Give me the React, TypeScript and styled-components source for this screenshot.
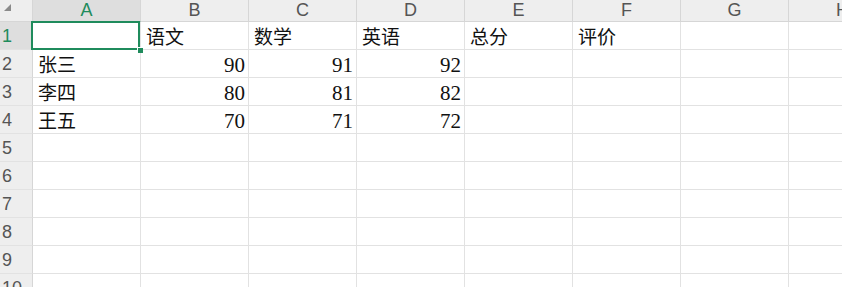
import styled, { createGlobalStyle } from "styled-components";

const GlobalStyle = createGlobalStyle`
  html, body {
    margin: 0;
    padding: 0;
    background: #fff;
    overflow: hidden;
  }
`;

const COLS = ["A", "B", "C", "D", "E", "F", "G", "H"];

const DATA: (string | number)[][] = [
  ["", "语文", "数学", "英语", "总分", "评价"],
  ["张三", 90, 91, 92],
  ["李四", 80, 81, 82],
  ["王五", 70, 71, 72],
];

const Sheet = styled.div`
  position: relative;
  display: grid;
  grid-template-columns: 33px repeat(8, 108px);
  grid-auto-rows: 28px;
  grid-template-rows: 22px;
  width: 842px;
  height: 287px;
  overflow: hidden;
`;

const Corner = styled.div`
  background: #eeeeee;
  border-right: 1px solid #d6d6d6;
  border-bottom: 1px solid #d6d6d6;
  position: relative;
`;

const Triangle = styled.div`
  position: absolute;
  left: 4px;
  top: 4px;
  width: 0;
  height: 0;
  border-left: 7px solid transparent;
  border-bottom: 7px solid #8a8a8a;
`;

const ColHead = styled.div<{ $active?: boolean }>`
  background: ${(p) => (p.$active ? "#dedede" : "#eeeeee")};
  border-right: 1px solid #d6d6d6;
  border-bottom: ${(p) => (p.$active ? "2px solid #1f8b5c" : "1px solid #d6d6d6")};
  margin-bottom: ${(p) => (p.$active ? "-1px" : "0")};
  color: ${(p) => (p.$active ? "#1f8b5c" : "#555")};
  font-family: "Liberation Sans", Arial, sans-serif;
  font-size: 18px;
  line-height: 20px;
  text-align: center;
`;

const RowHead = styled.div<{ $active?: boolean }>`
  background: ${(p) => (p.$active ? "#dedede" : "#eeeeee")};
  border-right: 1px solid #d6d6d6;
  border-bottom: 1px solid #e2e2e2;
  color: ${(p) => (p.$active ? "#1f8b5c" : "#555")};
  font-family: "Liberation Sans", Arial, sans-serif;
  font-size: 18px;
  line-height: 29px;
  padding-left: 2px;
`;

const Cell = styled.div<{ $num?: boolean }>`
  border-right: 1px solid #e2e2e2;
  border-bottom: 1px solid #e2e2e2;
  font-family: "Liberation Serif", "Noto Sans CJK SC", serif;
  font-size: ${(p) => (p.$num ? "21px" : "19px")};
  line-height: ${(p) => (p.$num ? "30px" : "31px")};
  color: #111;
  text-align: ${(p) => (p.$num ? "right" : "left")};
  padding: 0 3px 0 5px;
  white-space: nowrap;
  overflow: hidden;
`;

const Selection = styled.div`
  position: absolute;
  left: 31px;
  top: 21px;
  width: 105px;
  height: 25px;
  border: 2px solid #1f8b5c;
  pointer-events: none;
`;

const Handle = styled.div`
  position: absolute;
  right: -5px;
  bottom: -5px;
  width: 5px;
  height: 5px;
  background: #1f8b5c;
  border-left: 1px solid #fff;
  border-top: 1px solid #fff;
`;

export default function App() {
  const rows = Array.from({ length: 10 }, (_, i) => i);
  return (
    <>
      <GlobalStyle />
      <Sheet>
        <Corner>
          <Triangle />
        </Corner>
        {COLS.map((c, i) => (
          <ColHead key={c} $active={i === 0}>
            {c}
          </ColHead>
        ))}
        {rows.map((r) => (
          <>
            <RowHead key={`h${r}`} $active={r === 0}>
              {r + 1}
            </RowHead>
            {COLS.map((c, ci) => {
              const v = DATA[r]?.[ci];
              return (
                <Cell key={`${c}${r}`} $num={typeof v === "number"}>
                  {v ?? ""}
                </Cell>
              );
            })}
          </>
        ))}
        <Selection>
          <Handle />
        </Selection>
      </Sheet>
    </>
  );
}
